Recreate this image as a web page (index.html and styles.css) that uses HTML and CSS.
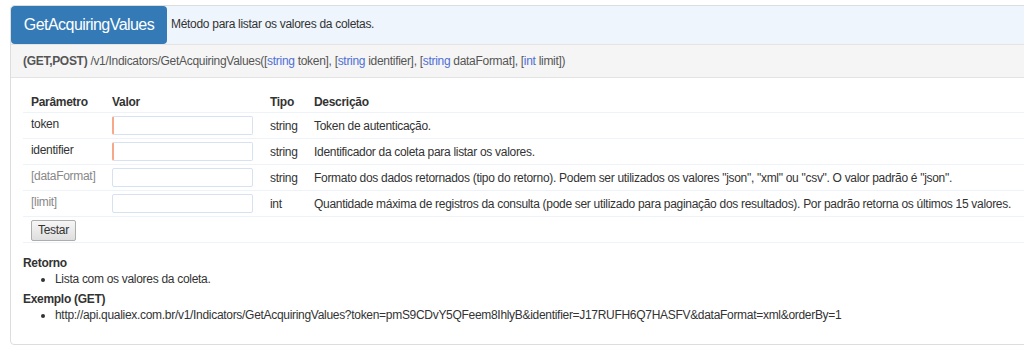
FILE: index.html
```html
<!DOCTYPE html>
<html lang="pt-BR">
  <head>
    <meta charset="UTF-8" />
    <title>GetAcquiringValues</title>
    <link rel="stylesheet" href="styles.css">
  </head>
  <body>
    <!-- Method panel -->
    <div class="method">
      <div class="method-head">
        <span class="method-name">GetAcquiringValues</span>
        <span class="method-desc">Método para listar os valores da coletas.</span>
      </div>
      <div class="method-sig">
        <b>(GET,POST)</b> /v1/Indicators/GetAcquiringValues([<span class="type">string</span> token], [<span class="type">string</span> identifier], [<span class="type">string</span> dataFormat], [<span class="type">int</span> limit])
      </div>
      <div class="method-body">
        <table class="params">
          <tr>
            <th class="c-param">Parâmetro</th>
            <th class="c-value">Valor</th>
            <th class="c-type">Tipo</th>
            <th>Descrição</th>
          </tr>
          <tr>
            <td class="c-param">token</td>
            <td class="c-value"><input type="text" class="required" /></td>
            <td class="c-type">string</td>
            <td>Token de autenticação.</td>
          </tr>
          <tr>
            <td class="c-param">identifier</td>
            <td class="c-value"><input type="text" class="required" /></td>
            <td class="c-type">string</td>
            <td>Identificador da coleta para listar os valores.</td>
          </tr>
          <tr>
            <td class="c-param optional">[dataFormat]</td>
            <td class="c-value"><input type="text" /></td>
            <td class="c-type">string</td>
            <td>Formato dos dados retornados (tipo do retorno). Podem ser utilizados os valores "json", "xml" ou "csv". O valor padrão é "json".</td>
          </tr>
          <tr>
            <td class="c-param optional">[limit]</td>
            <td class="c-value"><input type="text" /></td>
            <td class="c-type">int</td>
            <td>Quantidade máxima de registros da consulta (pode ser utilizado para paginação dos resultados). Por padrão retorna os últimos 15 valores.</td>
          </tr>
          <tr>
            <td colspan="4" class="c-btn"><button>Testar</button></td>
          </tr>
        </table>

        <div class="section">
          <h4>Retorno</h4>
          <ul>
            <li>Lista com os valores da coleta.</li>
          </ul>
        </div>
        <div class="section">
          <h4>Exemplo (GET)</h4>
          <ul>
            <li>http://api.qualiex.com.br/v1/Indicators/GetAcquiringValues?token=pmS9CDvY5QFeem8IhlyB&amp;identifier=J17RUFH6Q7HASFV&amp;dataFormat=xml&amp;orderBy=1</li>
          </ul>
        </div>
      </div>
    </div>
  </body>
</html>
```

FILE: styles.css
```css
html,
body {
  overflow: hidden;
}
body {
  margin: 0;
  padding: 5px 0 0 10px;
  font-family: "Liberation Sans", Arial, sans-serif;
  font-size: 12px;
  letter-spacing: -0.3px;
  color: #333;
  background: #fff;
}
.method {
  margin-right: -6px;
  border: 1px solid #ddd;
  border-radius: 4px;
}
.method-head {
  display: flex;
  align-items: center;
  height: 38px;
  background: #eef5fd;
}
.method-name {
  display: flex;
  align-items: center;
  justify-content: center;
  width: 156px;
  height: 38px;
  background: #337ab7;
  color: #fff;
  font-size: 16px;
  letter-spacing: -0.55px;
  border-radius: 4px;
}
.method-desc {
  margin-left: 4px;
  padding-bottom: 2px;
}
.method-sig {
  height: 32px;
  line-height: 33px;
  padding-left: 12px;
  background: #f5f5f5;
  border-top: 1px solid #e3e3e3;
  border-bottom: 1px solid #e3e3e3;
  color: #555;
}
.type {
  color: #4e6fd6;
}
.method-body {
  padding: 12px 0 21px 12px;
}
.params {
  width: 100%;
  table-layout: fixed;
  border-collapse: collapse;
}
.params th,
.params td {
  box-sizing: border-box;
}
.params th {
  text-align: left;
  font-weight: bold;
  padding: 5px 8px 3px 8px;
  height: 22px;
}
.params td {
  border-top: 1px solid #eef3fa;
  padding: 0 8px;
  height: 26px;
  vertical-align: middle;
}
.params td.c-param {
  vertical-align: top;
  padding-top: 4px;
}
.c-param {
  width: 81px;
}
.c-value {
  width: 158px;
}
.c-type {
  width: 44px;
}
.optional {
  color: #888;
}
.params input {
  display: block;
  box-sizing: border-box;
  width: 141px;
  height: 19px;
  margin: 0;
  border: 1px solid #d6e2f1;
  border-radius: 2px;
  background: #fff;
}
.params input.required {
  border-left: 2px solid #f8a88a;
}
.params tr:last-child td {
  border-bottom: 1px solid #eef3fa;
}
.params td.c-btn {
  padding-top: 2px;
  padding-bottom: 1px;
}
button {
  font-family: "Liberation Sans", Arial, sans-serif;
  font-size: 12px;
  letter-spacing: -0.3px;
  color: #333;
  height: 21px;
  padding: 0 6px;
  background: linear-gradient(#f6f6f6, #dedede);
  border: 1px solid #adadad;
  border-radius: 2px;
}
.section {
  margin-top: 13px;
}
.section + .section {
  margin-top: 5px;
}
.section h4 {
  margin: 0;
  font-size: 12px;
  line-height: 15px;
}
.section ul {
  margin: 0;
  padding-left: 32px;
  line-height: 16px;
}
```
